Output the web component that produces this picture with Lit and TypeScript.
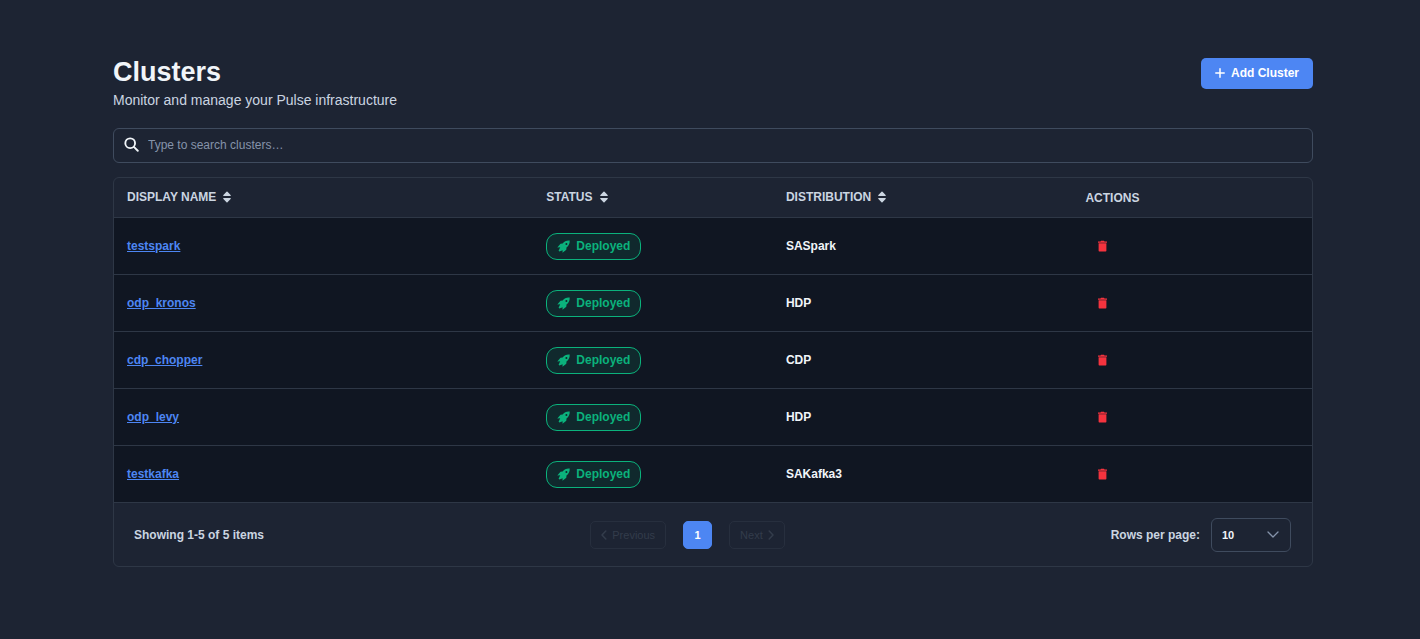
import { LitElement, html, css } from "lit";
import { customElement, state } from "lit/decorators.js";

interface Cluster {
  name: string;
  status: string;
  distribution: string;
}

const clusters: Cluster[] = [
  { name: "testspark", status: "Deployed", distribution: "SASpark" },
  { name: "odp_kronos", status: "Deployed", distribution: "HDP" },
  { name: "cdp_chopper", status: "Deployed", distribution: "CDP" },
  { name: "odp_levy", status: "Deployed", distribution: "HDP" },
  { name: "testkafka", status: "Deployed", distribution: "SAKafka3" },
];

const plusIcon = html`<svg width="10" height="10" viewBox="0 0 10 10" fill="none" stroke="currentColor" stroke-width="1.5" stroke-linecap="round" aria-hidden="true"><path d="M5 .8v8.400M.8 5h8.400" /></svg>`;

const searchIcon = html`<svg width="15" height="15" viewBox="0 0 16 16" fill="none" stroke="currentColor" stroke-width="2" stroke-linecap="round" aria-hidden="true"><circle cx="6.6" cy="6.6" r="5.2" /><path d="M10.500 10.500l4.200 4.200" /></svg>`;

const sortIcon = html`<svg width="8" height="12" viewBox="0 0 8 12" fill="currentColor" aria-hidden="true"><path d="M3.5.7a.7.7 0 0 1 1 0l3.1 3.4c.4.4.1 1-.5 1H.9c-.6 0-.9-.6-.5-1zM3.5 11.3a.7.7 0 0 0 1 0l3.1-3.4c.4-.4.1-1-.5-1H.9c-.6 0-.9.6-.5 1z" /></svg>`;

const rocketIcon = html`<svg width="13" height="13" viewBox="0 0 13 13" fill="currentColor" aria-hidden="true"><path fill-rule="evenodd" d="M12.700.5C9.600.2 7.300 1.300 5.600 3.500L3.500 3.700.3 7.400l2.900-.2-1.600 3.600.8.8 3.200-1.300-.1 2.400 3.800-2.900.2-2.200C11.600 5.900 12.900 3.500 12.700.5zM9.400 3a1 1 0 1 1 0 2 1 1 0 0 1 0-2z" /></svg>`;

const trashIcon = html`<svg width="9" height="12" viewBox="0 0 9 12" fill="currentColor" aria-hidden="true"><path d="M3 .8h3l.5.7H9v1.200H0V1.500h2.500zM.6 3.200h7.800v7.600a.7.7 0 0 1-.7.7H1.300a.7.7 0 0 1-.7-.7z" /></svg>`;

const leftIcon = html`<svg width="6" height="10" viewBox="0 0 6 10" fill="none" stroke="currentColor" stroke-width="1.5" stroke-linecap="round" stroke-linejoin="round" aria-hidden="true"><path d="M4.8 1L1 5l3.8 4" /></svg>`;

const rightIcon = html`<svg width="6" height="10" viewBox="0 0 6 10" fill="none" stroke="currentColor" stroke-width="1.5" stroke-linecap="round" stroke-linejoin="round" aria-hidden="true"><path d="M1.2 1L5 5 1.2 9" /></svg>`;

const chevronIcon = html`<svg class="chevron" width="12" height="7" viewBox="0 0 12 7" fill="none" stroke="currentColor" stroke-width="1.3" stroke-linecap="round" stroke-linejoin="round" aria-hidden="true"><path d="M1 1l5 5 5-5" /></svg>`;

@customElement("app-root")
export class AppRoot extends LitElement {
  @state() private query = "";

  static styles = css`
    :host {
      display: block;
      min-height: 100vh;
      box-sizing: border-box;
      padding: 56px 24px 72px 30px;
      background: #1d2433;
      color: #f1f5f9;
      font-family: "Liberation Sans", Arial, sans-serif;
      font-size: 12px;
      line-height: 16px;
    }
    * {
      box-sizing: border-box;
    }
    svg {
      display: block;
      flex: none;
    }
    button,
    input,
    select {
      font: inherit;
      color: inherit;
      margin: 0;
    }
    .page {
      max-width: 1200px;
      margin: 0 auto;
    }
    .top {
      display: flex;
      justify-content: space-between;
      align-items: flex-start;
      padding-top: 2px;
    }
    h1 {
      margin: 0;
      font-size: 27px;
      line-height: 28px;
      font-weight: 700;
    }
    .subtitle {
      margin: 4px 0 0;
      font-size: 14px;
      line-height: 20px;
      color: #cbd5e1;
    }
    .add {
      display: flex;
      align-items: center;
      gap: 6px;
      height: 31px;
      padding: 0 14px 1px;
      border: 0;
      border-radius: 5px;
      background: #4d86f3;
      color: #fff;
      font-weight: 700;
    }
    .search {
      display: flex;
      align-items: center;
      gap: 9px;
      height: 35px;
      margin-top: 18px;
      padding: 0 10px 2px;
      border: 1px solid #3f4b5e;
      border-radius: 6px;
    }
    .search input {
      flex: 1;
      min-width: 0;
      padding: 0;
      border: 0;
      outline: 0;
      background: transparent;
    }
    .search input::placeholder {
      color: #8593aa;
      opacity: 1;
    }
    .card {
      margin-top: 14px;
      border: 1px solid #2e3746;
      border-radius: 6px;
      overflow: hidden;
    }
    table {
      width: 100%;
      table-layout: fixed;
      border-collapse: separate;
      border-spacing: 0;
    }
    th,
    td {
      padding: 0 13px;
      border-bottom: 1px solid #2e3746;
      text-align: left;
      font-weight: 700;
      vertical-align: middle;
    }
    th {
      height: 40px;
      color: #cbd5e1;
    }
    td {
      height: 57px;
      background: #101622;
    }
    .name {
      width: 35%;
    }
    .status,
    .actions {
      width: 20%;
    }
    .distribution {
      width: 25%;
    }
    .sort {
      display: flex;
      align-items: center;
      gap: 7px;
      padding: 0 0 2px;
      border: 0;
      background: none;
    }
    a {
      color: #4d86f3;
      text-decoration: underline;
      text-underline-offset: 1px;
    }
    .badge {
      display: inline-flex;
      align-items: center;
      gap: 6px;
      height: 27px;
      padding: 0 10px;
      border: 1px solid #0bb27c;
      border-radius: 11px;
      background: #10292d;
      color: #0bb27c;
      vertical-align: middle;
    }
    .delete {
      display: block;
      margin-left: 5px;
      padding: 4px 8px;
      border: 0;
      background: none;
      color: #f5333e;
    }
    .footer {
      display: grid;
      grid-template-columns: 1fr auto 1fr;
      align-items: center;
      height: 63px;
      padding: 0 21px 0 20px;
      font-weight: 700;
      color: #cbd5e1;
    }
    .pager {
      display: flex;
      gap: 17px;
      margin-right: 50px;
    }
    .pager button {
      display: flex;
      align-items: center;
      justify-content: center;
      gap: 5px;
      height: 28px;
      padding: 0 10px;
      border: 1px solid #272f3e;
      border-radius: 5px;
      background: none;
      color: #333c4b;
      font-size: 11px;
      font-weight: 400;
    }
    .pager .current {
      width: 29px;
      border-color: #4d86f3;
      background: #4d86f3;
      color: #fff;
      font-weight: 700;
    }
    .rows {
      display: flex;
      align-items: center;
      justify-content: flex-end;
      gap: 11px;
    }
    .select {
      display: grid;
      align-items: center;
      width: 80px;
      height: 34px;
    }
    .select select,
    .chevron {
      grid-area: 1 / 1;
    }
    .select select {
      width: 100%;
      height: 100%;
      padding: 0 10px;
      appearance: none;
      border: 1px solid #3f4b5e;
      border-radius: 6px;
      background: #1d2433;
      color: #f1f5f9;
      font-size: 11px;
    }
    .chevron {
      justify-self: end;
      margin-right: 12px;
      color: #8593aa;
      pointer-events: none;
    }
  `;

  private onSearch(event: Event) {
    this.query = (event.target as HTMLInputElement).value;
  }

  private renderRow(cluster: Cluster) {
    return html`<tr>
      <td><a href="#${cluster.name}">${cluster.name}</a></td>
      <td><span class="badge">${rocketIcon}${cluster.status}</span></td>
      <td>${cluster.distribution}</td>
      <td><button class="delete" aria-label="Delete ${cluster.name}">${trashIcon}</button></td>
    </tr>`;
  }

  render() {
    const visible = clusters.filter((c) => c.name.includes(this.query.toLowerCase()));
    return html`
      <main class="page">
        <header class="top">
          <div>
            <h1>Clusters</h1>
            <p class="subtitle">Monitor and manage your Pulse infrastructure</p>
          </div>
          <button class="add">${plusIcon}Add Cluster</button>
        </header>
        <label class="search">
          ${searchIcon}
          <input type="text" aria-label="Search clusters" placeholder="Type to search clusters…" @input=${this.onSearch} />
        </label>
        <section class="card">
          <table>
            <thead>
              <tr>
                <th class="name"><button class="sort">DISPLAY NAME ${sortIcon}</button></th>
                <th class="status"><button class="sort">STATUS ${sortIcon}</button></th>
                <th class="distribution"><button class="sort">DISTRIBUTION ${sortIcon}</button></th>
                <th class="actions">ACTIONS</th>
              </tr>
            </thead>
            <tbody>
              ${visible.map((c) => this.renderRow(c))}
            </tbody>
          </table>
          <div class="footer">
            <span>Showing 1-5 of 5 items</span>
            <nav class="pager" aria-label="Pagination">
              <button disabled>${leftIcon}Previous</button>
              <button class="current" aria-current="page">1</button>
              <button disabled>Next${rightIcon}</button>
            </nav>
            <div class="rows">
              <label for="page-size">Rows per page:</label>
              <span class="select">
                <select id="page-size">
                  <option selected>10</option>
                  <option>20</option>
                  <option>50</option>
                </select>
                ${chevronIcon}
              </span>
            </div>
          </div>
        </section>
      </main>
    `;
  }
}
